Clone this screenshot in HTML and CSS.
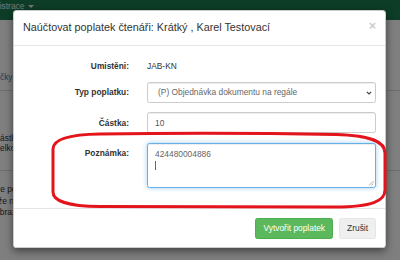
FILE: index.html
```html
<!DOCTYPE html>
<html lang="cs">
<head>
<meta charset="utf-8">
<title>Naúčtovat poplatek</title>
<link rel="stylesheet" href="styles.css">
</head>
<body>
<div class="page">
  <header class="navbar"><a class="nav-link">Administrace <span class="caret-down"></span></a></header>
  <div class="tabs"><a class="tab">Výpůjčky</a></div>
  <div class="summary">
    <div class="cut-c">Částka</div>
    <div class="cut-c">Celkově</div>
  </div>
  <div class="notes">
    <div class="cut-j">Je poplatek</div>
    <div class="cut-z">že na</div>
    <div class="cut-zo">zobrazit</div>
  </div>
</div>
<div class="backdrop"></div>
<div class="modal-wrap">
  <div class="modal">
    <div class="modal-header">
      <h4 class="modal-title">Naúčtovat poplatek čtenáři: Krátký , Karel Testovací</h4>
      <button class="close" type="button">×</button>
    </div>
    <form class="modal-body">
      <label class="lbl">Umistěni:</label>
      <div class="static">JAB-KN</div>
      <label class="lbl">Typ poplatku:</label>
      <div class="select-wrap">
        <select class="control select"><option>(P) Objednávka dokumentu na regále</option></select>
        <svg class="chevron" width="6" height="4" viewBox="0 0 6 4"><path d="M0.8 0.8 L3 3 L5.2 0.8" stroke="#444" stroke-width="1.2" fill="none"/></svg>
      </div>
      <label class="lbl">Částka:</label>
      <input class="control" type="text" value="10">
      <label class="lbl">Poznámka:</label>
      <div class="control textarea">424480004886<span class="text-caret"></span>
        <svg class="grip" width="6" height="6" viewBox="0 0 6 6"><path d="M5.5 1 L1 5.5 M5.5 3.5 L3.5 5.5" stroke="#999" stroke-width="0.8" fill="none"/></svg>
      </div>
    </form>
    <div class="modal-footer">
      <button class="btn btn-success" type="button">Vytvořit poplatek</button>
      <button class="btn btn-default" type="button">Zrušit</button>
    </div>
  </div>
</div>
<svg class="annotation" width="400" height="260" viewBox="0 0 400 260">
  <path d="M100 134 C180 133, 280 133.5, 336 134.5 C372 135.5, 385 142, 385 153 L385 190 C385 201, 372 207, 335 207 L100 206.5 C66 206.5, 53 200, 53 192 L53 149 C53 140, 66 134.5, 100 134 Z" fill="none" stroke="#e3141c" stroke-width="3"/>
</svg>
</body>
</html>
```
FILE: styles.css
```css
* { box-sizing: border-box; }
html, body { margin: 0; padding: 0; }
body {
  width: 400px;
  height: 260px;
  overflow: hidden;
  position: relative;
  font-family: "Liberation Sans", Arial, sans-serif;
  font-size: 8.4px;
  color: #333;
  background: #fff;
}
.page { overflow: hidden; height: 260px; }
.navbar { height: 20px; background: #1a7a4e; }
.nav-link { display: inline-block; margin-left: -24px; line-height: 12px; color: #f0f0f0; text-decoration: none; }
.caret-down {
  display: inline-block; width: 0; height: 0; vertical-align: middle; margin-left: 1px;
  border-top: 3px solid; border-left: 3px solid transparent; border-right: 3px solid transparent;
}
.tabs { margin-top: 51px; padding-bottom: 7px; border-bottom: 1px solid #ddd; line-height: 12px; }
.tab { display: block; margin-left: -21px; color: #337ab7; }
.summary { padding: 42px 0 17px; border-bottom: 1px solid #ddd; line-height: 10px; }
.notes { padding-top: 13px; line-height: 11.5px; }
.cut-c { margin-left: -6px; }
.cut-j { margin-left: -4px; }
.cut-z { margin-left: -2px; }
.cut-zo { margin-left: -9px; }

.backdrop { position: absolute; inset: 0; background: rgba(0, 0, 0, 0.5); }
.modal-wrap { position: absolute; inset: 0; padding: 10px 0 0 13px; }
.modal {
  width: 373px;
  background: #fff;
  border: 1px solid rgba(0, 0, 0, 0.2);
  border-radius: 3.6px;
  box-shadow: 0 3px 9px rgba(0, 0, 0, 0.5);
}
.modal-header {
  display: flex; align-items: center;
  height: 35px; padding: 0 9px;
  border-bottom: 1px solid #e5e5e5;
}
.modal-title { flex: 1; margin: 0 0 2px; font-size: 10.8px; font-weight: normal; line-height: 16px; color: #333; }
.close {
  margin-top: -4px; padding: 0; border: 0; background: none;
  font-family: inherit; font-size: 12.6px; font-weight: bold; line-height: 1;
  color: #000; opacity: 0.2;
}
.modal-body {
  display: grid;
  grid-template-columns: 106px 1fr;
  column-gap: 18px;
  row-gap: 9.5px;
  margin: 0;
  padding: 9.5px 9px 20px;
}
.lbl { font-weight: bold; text-align: right; padding-top: 4.5px; line-height: 12px; }
.static { padding-top: 4.5px; line-height: 12px; }
.control {
  height: 21px; margin: 0; padding: 0 7px;
  font-family: inherit; font-size: 8.4px; color: #555;
  background: #fff;
  border: 1px solid #ccc; border-radius: 2.4px;
  box-shadow: inset 0 1px 1px rgba(0, 0, 0, 0.075);
}
.select-wrap { position: relative; display: flex; }
.select { flex: 1; appearance: none; -webkit-appearance: none; padding: 0 14px 0 10px; color: #666; }
.chevron { position: absolute; right: 4px; top: 9px; pointer-events: none; }
.textarea {
  position: relative;
  height: 45.5px;
  padding: 4px 7px;
  line-height: 12px;
  color: #666;
  border-color: #66afe9;
  box-shadow: inset 0 1px 1px rgba(0, 0, 0, 0.075), 0 0 5px rgba(102, 175, 233, 0.6);
}
.text-caret { display: block; width: 1px; height: 9px; margin-top: 1.5px; background: #666; }
.grip { position: absolute; right: 1px; bottom: 1px; }
.modal-footer {
  display: flex; justify-content: flex-end; gap: 6px;
  padding: 9px 9px 8px;
  border-top: 1px solid #e5e5e5;
}
.btn {
  height: 21px; padding: 0 7px;
  font-family: inherit; font-size: 8.4px; line-height: 19px;
  border: 1px solid transparent; border-radius: 2.4px;
}
.btn-success { background: #5cb85c; border-color: #4cae4c; color: #fff; }
.btn-default { background: #efefef; border-color: #e6e6e6; color: #333; }
.annotation { position: absolute; left: 0; top: 0; pointer-events: none; }
```
